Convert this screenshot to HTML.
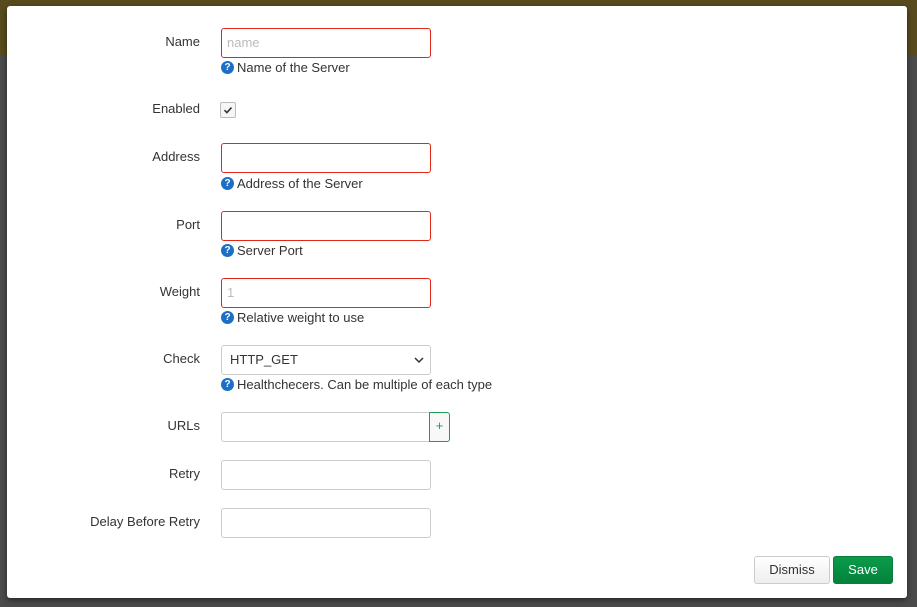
<!DOCTYPE html>
<html><head><meta charset="utf-8"><style>
*{box-sizing:border-box}
body{margin:0;width:917px;height:607px;overflow:hidden;background:#4b4b4b;font-family:"Liberation Sans",sans-serif;font-size:13px;color:#333;position:relative}
.top{position:absolute;left:0;top:0;width:917px;height:55px;background:#574b1e}
.bgl{position:absolute;left:0;width:7px;height:1px;background:#5a5a5a}
.modal{position:absolute;left:7px;top:6px;width:900px;height:592px;background:#fff;border-radius:3px;box-shadow:0 2px 6px rgba(0,0,0,.5)}
.lbl{position:absolute;left:0;width:193px;text-align:right;font-size:13px;color:#333}
.in{position:absolute;left:214px;width:210px;height:30px;border:1px solid #ccc;border-radius:3px;background:#fff;font-size:13px;padding:6px 5px;color:#bbb}
.err{border-color:#e0281a}
.help{position:absolute;left:214px;font-size:13px;color:#333;display:flex;align-items:center}
.q{width:13px;height:13px;border-radius:50%;background:#1d6fc6;color:#fff;font-size:10px;font-weight:bold;text-align:center;line-height:13px;margin-right:3px}
.btn{position:absolute;top:550px;height:28px;border-radius:3px;font-size:13px;text-align:center;line-height:26px}
</style></head><body>
<div class="top"></div>
<div class="modal">
<div class="lbl" style="top:28px">Name</div>
<div class="in err" style="top:22px">name</div>
<div class="help" style="top:54px"><span class="q">?</span>Name of the Server</div>

<div class="lbl" style="top:95px">Enabled</div>
<div style="position:absolute;left:213px;top:96px;width:16px;height:16px;border:1px solid #bbb;border-radius:2px;background:#f6f6f6">
<svg width="14" height="14" viewBox="0 0 14 14" style="position:absolute;left:0;top:0"><path d="M3.5 7.2l2.4 2.4 4.6-5" fill="none" stroke="#333" stroke-width="1.6"/></svg></div>

<div class="lbl" style="top:143px">Address</div>
<div class="in err" style="top:137px"></div>
<div class="help" style="top:170px"><span class="q">?</span>Address of the Server</div>

<div class="lbl" style="top:211px">Port</div>
<div class="in err" style="top:205px"></div>
<div class="help" style="top:237px"><span class="q">?</span>Server Port</div>

<div class="lbl" style="top:278px">Weight</div>
<div class="in err" style="top:272px">1</div>
<div class="help" style="top:304px"><span class="q">?</span>Relative weight to use</div>

<div class="lbl" style="top:345px">Check</div>
<div class="in" style="top:339px;color:#333;padding-left:8px">HTTP_GET
<svg width="10" height="7" viewBox="0 0 10 7" style="position:absolute;right:6px;top:11px"><path d="M1 1l4 4 4-4" fill="none" stroke="#333" stroke-width="1.5"/></svg></div>
<div class="help" style="top:371px"><span class="q">?</span>Healthchecers. Can be multiple of each type</div>

<div class="lbl" style="top:412px">URLs</div>
<div class="in" style="top:406px;width:209px;border-radius:3px 0 0 3px"></div>
<div style="position:absolute;left:422px;top:406px;width:21px;height:30px;border:1px solid #1e9b57;border-radius:0 3px 3px 0;background:#f8f8f8;color:#1e9b57;text-align:center;line-height:26px;font-size:13px">+</div>

<div class="lbl" style="top:460px">Retry</div>
<div class="in" style="top:454px"></div>

<div class="lbl" style="top:508px">Delay Before Retry</div>
<div class="in" style="top:502px"></div>

<div class="btn" style="left:747px;width:76px;border:1px solid #ccc;background:linear-gradient(#fff,#eee);color:#333">Dismiss</div>
<div class="btn" style="left:826px;width:60px;border:1px solid #0a7c3b;background:linear-gradient(#0a9c4a,#05823c);color:#fff">Save</div>
</div>
</body></html>
